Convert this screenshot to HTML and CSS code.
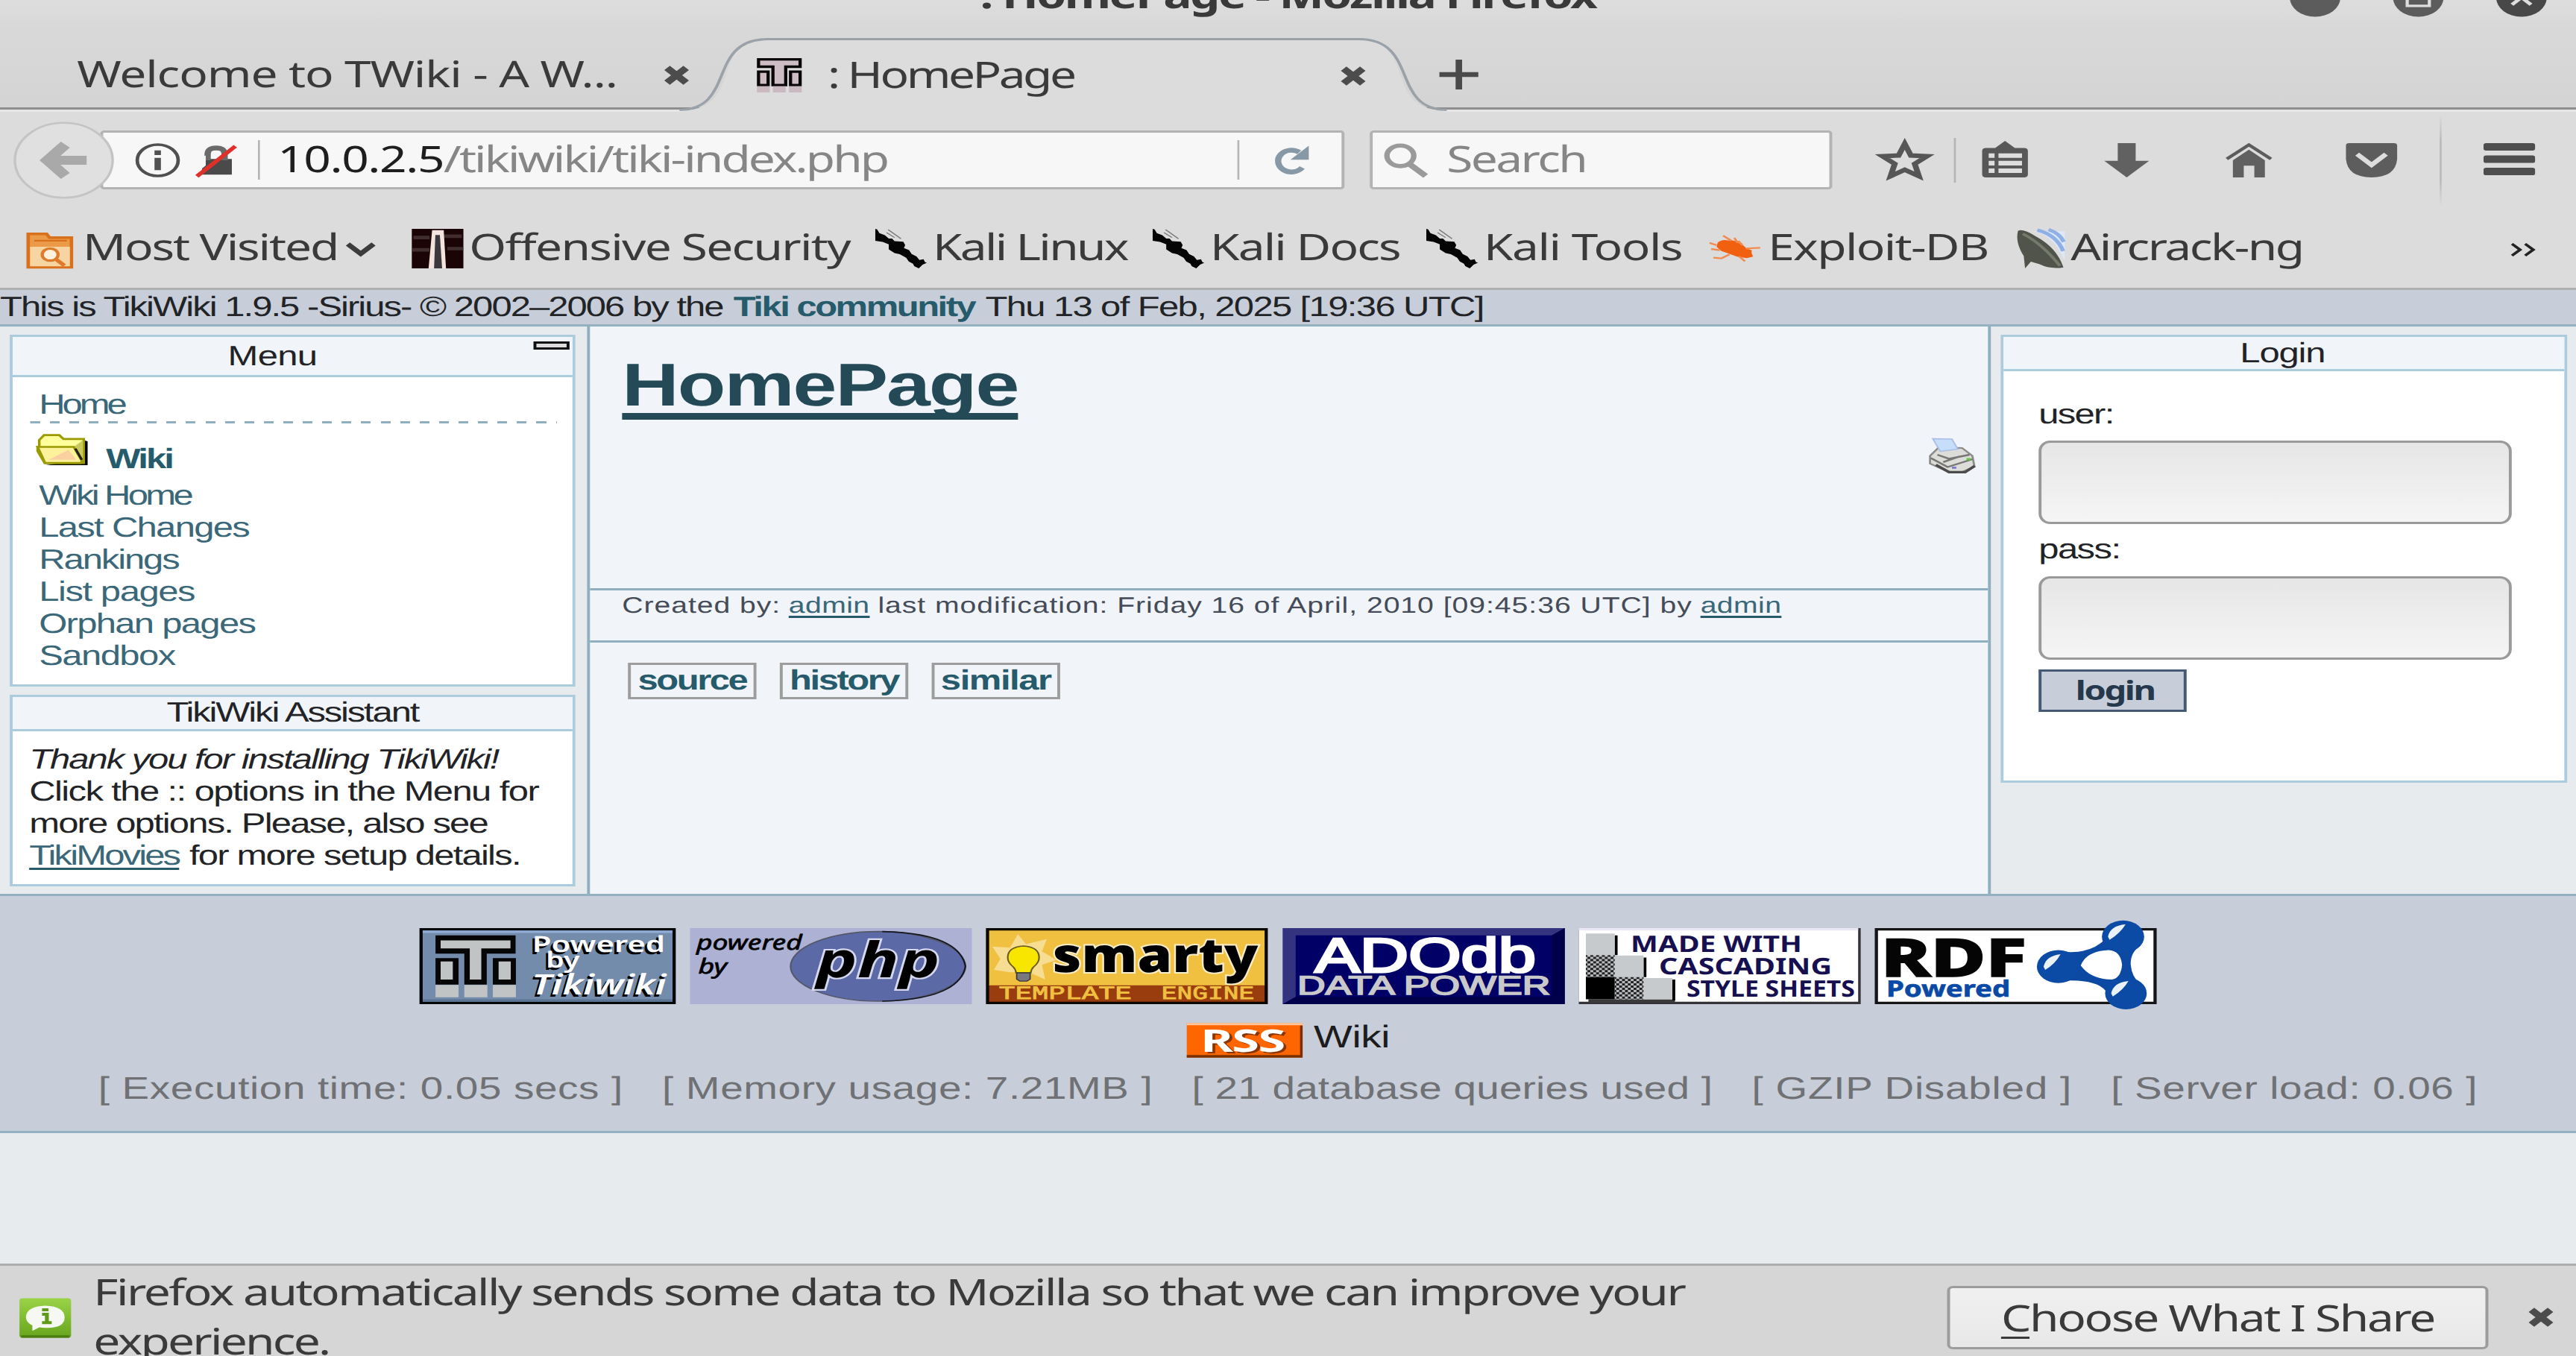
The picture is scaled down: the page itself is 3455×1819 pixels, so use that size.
FILE: index.html
```html
<!DOCTYPE html>
<html lang="en">
<head>
<meta charset="utf-8">
<title>: HomePage - Mozilla Firefox</title>
<link rel="stylesheet" href="styles.css">
</head>
<body>
<div class="window">
  <header class="titlebar">
    <div class="title">: HomePage - Mozilla Firefox</div>
    <div class="controls">
      <svg class="ctl" viewBox="0 0 16 16"><circle cx="8" cy="8" r="8" fill="#5c5c5c"/><path d="M4.500 8.400h7" stroke="#ddd" stroke-width="1.200"/></svg>
      <svg class="ctl" viewBox="0 0 16 16"><circle cx="8" cy="8" r="8" fill="#5c5c5c"/><path d="M4.500 4.500h7v7h-7z" fill="none" stroke="#ddd" stroke-width="1"/></svg>
      <svg class="ctl" viewBox="0 0 16 16"><circle cx="8" cy="8" r="8" fill="#484848"/><path d="M5 5l6 6M11 5l-6 6" stroke="#ddd" stroke-width="1.300"/></svg>
    </div>
  </header>

  <nav class="tabs">
    <div class="tab tab-first">
      <span class="ls-welcome">Welcome to TWiki - A W...</span>
      <svg class="close" viewBox="0 0 8 8"><path d="M1.200 1.200l5.600 5.600M6.800 1.200l-5.600 5.600" stroke="#4c4c4c" stroke-width="2.300"/></svg>
    </div>
    <div class="tab tab-active">
      <svg class="tab-shape" viewBox="0 0 780 97" preserveAspectRatio="none"><path d="M0 97V95C62 93 26 4 86 2.500H694C754 4 718 93 780 95V97z" fill="#dcdcdc"/><path d="M-4 94.500C54 94 24 3 86 2.500H694C756 3 726 94 784 94.500" fill="none" stroke="#9aa1a8" stroke-width="3"/></svg>
      <svg class="favicon" viewBox="0 0 14 14"><path d="M.5.500h13v3H9V11H5V3.500H.500z" fill="#cdbcc4" stroke="#0a0608" stroke-width="1"/><path d="M.5 5.500h3V11h-3zM10.500 5.500h3V11h-3z" fill="#cdbcc4" stroke="#0a0608" stroke-width="1"/><path d="M0 11.500h4V14H0zM5 11.500h4V14H5zM10 11.500h4V14h-4z" fill="#cbb9c1"/></svg>
      <span class="ls-hometab">: HomePage</span>
      <svg class="close" viewBox="0 0 8 8"><path d="M1.200 1.200l5.600 5.600M6.800 1.200l-5.600 5.600" stroke="#4c4c4c" stroke-width="2.300"/></svg>
    </div>
    <svg class="plus" viewBox="0 0 12 12"><path d="M6 0v12M0 6h12" stroke="#4a4a4a" stroke-width="2"/></svg>
  </nav>

  <div class="toolbar">
    <svg class="i-back" viewBox="0 0 32 32"><circle cx="16" cy="16" r="15.600" fill="#e0e0e0" stroke="#c4c4c4" stroke-width=".8"/><path d="M16.500 9.500L10.800 16l5.700 6.500M11.500 16H23.300" fill="none" stroke="#a9a9a9" stroke-width="3.800"/></svg>
    <div class="urlbar">
      <svg class="i-info" viewBox="0 0 14 14"><circle cx="7" cy="7" r="6.400" fill="none" stroke="#505050" stroke-width="1.100"/><path d="M7 3v1.900M7 6v5" stroke="#505050" stroke-width="2"/></svg>
      <svg class="i-lock" viewBox="0 0 13 13"><path d="M2 5.500h9.500V12H2z" fill="#4a4a4a"/><path d="M3.800 6V3.500Q3.800.900 6.500.900T9.200 3.500V6" fill="none" stroke="#6a6a6a" stroke-width="2"/><path d="M0 11.600L3.200 8.200V4L0 6z" fill="#f7f7f7"/><path d="M.4 12.700L12.600.200" stroke="#e0302a" stroke-width="1.500"/></svg>
      <i class="sep"></i>
      <span class="url"><span class="host">10.0.2.5</span><span class="path">/tikiwiki/tiki-index.php</span></span>
      <i class="sep"></i>
      <svg class="i-reload" viewBox="0 0 12 12"><path d="M9.700 9A4.200 4.500 0 1 1 8.800 2.700" fill="none" stroke="#8798a6" stroke-width="2"/><path d="M11.800 0v5.800H6z" fill="#8798a6"/></svg>
    </div>
    <div class="searchbar">
      <svg class="i-mag" viewBox="0 0 14 14"><circle cx="5.300" cy="5.200" r="4.200" fill="none" stroke="#9a9a9a" stroke-width="1.700"/><path d="M8.200 8.600l5 4.800" stroke="#9a9a9a" stroke-width="2.100"/></svg>
      <span class="ls-search">Search</span>
    </div>
    <svg class="i-star" viewBox="0 0 16 16"><path d="M8 1.500l1.900 4.700 5 .3-3.800 3.100 1.300 5L8 12l-4.400 2.600 1.300-5L1.100 6.500l5-.3z" fill="none" stroke="#565656" stroke-width="1.800"/></svg>
    <i class="sep tall"></i>
    <svg class="i-clip" viewBox="0 0 14 14.600"><path d="M1.200 2.800H4L7 0l3 2.800h2.800q1.200 0 1.200 1.200v9.400q0 1.200-1.200 1.200H1.200Q0 14.600 0 13.400V4q0-1.200 1.200-1.200z" fill="#585858"/><path d="M2 5h1.800v1.800H2zM5 5h7.200v1.800H5zM2 8h1.800v1.800H2zM5 8h7.200v1.800H5zM2 11h1.800v1.800H2zM5 11h7.200v1.800H5z" fill="#dedede"/></svg>
    <svg class="i-down" viewBox="0 0 14 14"><path d="M4.200 0h5.600v7.200H14L7 14 0 7.200h4.200z" fill="#616161"/></svg>
    <svg class="i-home" viewBox="0 0 15 14"><path d="M.6 6.500L7.500.700l6.900 5.800" fill="none" stroke="#5c5c5c" stroke-width="1.200"/><path d="M7.500 2.700l5 4.300v7H9.200V9.200H5.900V14H2.500V7z" fill="#606060"/></svg>
    <svg class="i-pocket" viewBox="0 0 16 14"><path d="M1 0h14q1 0 1 1v5.500Q15.500 14 8 14T0 6.500V1q0-1 1-1z" fill="#5d5d5d"/><path d="M3.500 4.500L8 8.900l4.500-4.400" fill="none" stroke="#dedede" stroke-width="1.700"/></svg>
    <i class="sep fade"></i>
    <svg class="i-menu" viewBox="0 0 16 13"><path d="M0 .8Q0 0 .8 0h14.400q.8 0 .8.800v1.500q0 .7-.8.700H.8Q0 3 0 2.300zM0 5.800Q0 5 .8 5h14.400q.8 0 .8.800v1.500q0 .7-.8.700H.8Q0 8 0 7.300zM0 10.800Q0 10 .8 10h14.400q.8 0 .8.800v1.500q0 .7-.8.700H.8q-.8 0-.8-.7z" fill="#4e4e4e"/></svg>
  </div>

  <svg class="defs" width="0" height="0"><defs>
    <symbol id="kali" viewBox="0 0 16 16"><path d="M0 0l.6.200L1.300 1.700 3 2.600l1.200 1.300 1 0L6 5l2.700.200.6 1.400L8.900 7.800l1.600.800.8 1.600 1.500 1 .9 1.400 1.300-.3.400 1.100.6.300-1.300.8L13.500 16l-1.400-.9-.4-1-1.300-.9-.8-1.500-2-1.400-1.600-.5L4.200 8.300l0-2L2.300 5.300 0 4.800z" fill="#050505"/><path d="M4 .3l4 3.700M3.500 1.500L6 3.500" stroke="#777" stroke-width=".35"/></symbol>
  </defs></svg>
  <nav class="bookmarks">
    <a class="bm"><svg class="i-folder" viewBox="0 0 15 15"><path d="M.6.700h5.800l.9 1.500h6.900v12.200H.600z" fill="#eb9a48" stroke="#d9711c" stroke-width="1.100"/><path d="M1.200 6h12.500v8H1.200z" fill="#f6d5a2"/><path d="M2.500 3.500h10.300" stroke="#d9711c" stroke-width=".7"/><circle cx="7.500" cy="9.200" r="2.500" fill="#fff1dc" stroke="#de7a2a" stroke-width="1"/><path d="M9.200 11l2.800 2.700" stroke="#de7a2a" stroke-width="1.400"/></svg><span class="ls-mv">Most Visited</span><svg class="i-chev" viewBox="0 0 10 6"><path d="M1 1l4 3.900L9 1" fill="none" stroke="#3c3c3c" stroke-width="1.800"/></svg></a>
    <a class="bm"><svg class="i16" viewBox="0 0 16 16"><path d="M0 0h16v16H0z" fill="#1b0405"/><path d="M.5 3.500h5M10 3h5.500M0 8.500h5.500M11 8h5" stroke="#5a4a4a" stroke-width="1.400" opacity=".6"/><path d="M6.300.500h3.600L10.600 16H5.200z" fill="#f3e5dd"/><path d="M7.300 2.500h1.400l.7 13.500H6.900z" fill="#3a3a3e"/></svg><span class="ls-os">Offensive Security</span></a>
    <a class="bm"><svg class="i16"><use href="#kali"/></svg><span class="ls-kl">Kali Linux</span></a>
    <a class="bm"><svg class="i16"><use href="#kali"/></svg><span class="ls-kd">Kali Docs</span></a>
    <a class="bm"><svg class="i16"><use href="#kali"/></svg><span class="ls-kt">Kali Tools</span></a>
    <a class="bm"><svg class="i-bug" viewBox="0 0 16 12"><path d="M2.800 3.500Q4 2 6 2.500q2-.3 3.500 1.200 1.500.8 2.300 2.100l1.600.7-.1 1 .5 1.600-2 .6-3-.6-2.500-1.200L4 6.800 2.500 5.200z" fill="#f0600f"/><path d="M7 2.600L4.500.600M9 3.500L8 1.500M11.500 5.800l4.500-.3M9.500 9l1.800 2M6.500 8.200L4 9.800l-2.500-.3M3.500 6.500L.8 6M2.500 4.500L.3 3.500M10.500 4.500L9.200 2.700" fill="none" stroke="#f28b50" stroke-width=".7"/></svg><span class="ls-ex">Exploit-DB</span></a>
    <a class="bm"><svg class="i15" viewBox="0 0 15 16"><path d="M4 1q7 0 11 12V1z" fill="#dfe8f6"/><path d="M6.500.500q6 2 8 8.500M10 .3q3.500 1.500 4.700 5" fill="none" stroke="#8fb0e6" stroke-width="1.300"/><path d="M.5.800Q2-.2 6 3q6.500 4.500 8.600 12.600-4 .9-7.500-1.300L4.500 13.300 2.700 16 2.300 11Q-.4 5.500.500.800z" fill="#50544a"/><path d="M2 2q6 4 11.500 13" fill="none" stroke="#757b6c" stroke-width="1"/></svg><span class="ls-ac">Aircrack-ng</span></a>
    <span class="more"><svg viewBox="0 0 9 5.500"><path d="M1 .3l2.600 2.450L1 5.200M5.200.300l2.600 2.450L5.200 5.200" fill="none" stroke="#222" stroke-width="1"/></svg></span>
  </nav>

  <div class="tikibar"><span class="ls-tb1">This is TikiWiki 1.9.5 -Sirius- © 2002–2006 by the</span> <b class="ls-tb2">Tiki community</b> <span class="ls-tb3">Thu 13 of Feb, 2025 [19:36 UTC]</span></div>

  <main class="columns">
    <aside class="left">
      <section class="box menu">
        <h3><span class="ls-menu">Menu</span><i class="fold"></i></h3>
        <div class="body">
          <a class="row ls-home">Home</a>
          <hr class="dash">
          <div class="wikirow"><svg class="i-open" viewBox="0 0 16 13"><path d="M3 12.700h13V3l-1.500-.5v8z" fill="#000"/><path d="M1 2.500L2.500.500h4.700l1.300 1.600h6.300v9.700H2.700L.500 7V5.300H1z" fill="#ffff9c" stroke="#9b9a00" stroke-width=".8"/><path d="M11.700 5.300l2.900-2.800v9z" fill="#c9c85a"/><path d="M.5 5.300h11.200l2.600 5.800-.5.700H2.800z" fill="#fcf29c" stroke="#9b9a00" stroke-width=".8"/><path d="M4 10.500L10 6.500l2.500 4z" fill="#fbd0a0"/><path d="M12.200 6l2 4.500" stroke="#222" stroke-width=".8"/></svg><b class="ls-wikib">Wiki</b></div>
          <a class="row ls-wh">Wiki Home</a>
          <a class="row ls-last">Last Changes</a>
          <a class="row ls-rank">Rankings</a>
          <a class="row ls-list">List pages</a>
          <a class="row ls-orph">Orphan pages</a>
          <a class="row ls-sand">Sandbox</a>
        </div>
      </section>
      <section class="box assistant">
        <h3><span class="ls-asst">TikiWiki Assistant</span></h3>
        <div class="body">
          <p class="ls-l1"><em>Thank you for installing TikiWiki!</em></p>
          <p class="ls-l2">Click the :: options in the Menu for</p>
          <p class="ls-l3">more options. Please, also see</p>
          <p><a class="link ls-tm">TikiMovies</a> <span class="ls-l4">for more setup details.</span></p>
        </div>
      </section>
    </aside>

    <article class="center">
      <div class="content">
        <h1>HomePage</h1>
        <svg class="i-print" viewBox="0 0 16 16"><path d="M.5 8l3-3.800 8 .300L15 8l.7 4.800L11 15.500 6.500 15 .5 11.500z" fill="#dcdcd8" stroke="#8b8b88" stroke-width=".7"/><path d="M1.400.300l6.600.200L10 5 4 6z" fill="#c7defb" stroke="#a9bce8" stroke-width=".5"/><path d="M.8 9l5.700 4 8.500-3.500M3 7.500l4 1.800 7-1.800M5 10.800l5.500-2.500" fill="none" stroke="#777" stroke-width=".8"/><path d="M2.500 12l4.500 3.300h5.500l3.300-2.800" fill="none" stroke="#4b4b4b" stroke-width="1.100"/><path d="M13 9.500h1.400" stroke="#5fc83c" stroke-width="1"/><path d="M8 13.300h1.500" stroke="#7a76c9" stroke-width=".9"/></svg>
      </div>
      <div class="meta"><span class="ls-cr">Created by:</span> <a class="link">admin</a> <span class="ls-mid">last modification: Friday 16 of April, 2010 [09:45:36 UTC] by</span> <a class="link">admin</a></div>
      <div class="buttons"><a class="ls-src">source</a><a class="ls-src">history</a><a class="ls-sim">similar</a></div>
    </article>

    <aside class="right">
      <section class="box login">
        <h3><span class="ls-login">Login</span></h3>
        <form class="body">
          <label class="ls-user">user:</label>
          <input type="text">
          <label class="ls-pass">pass:</label>
          <input type="password">
          <button type="button">login</button>
        </form>
      </section>
    </aside>
  </main>

  <footer class="footer">
    <div class="badges">
      <svg class="b80" viewBox="0 0 80 31"><path d="M0 0h80v31H0z" fill="#050608"/><path d="M1 1h78v29H1z" fill="#748cab"/><path d="M1 1h78v1H1z" fill="#8fabd6"/><path d="M1 29h78v1H1z" fill="#5d7595"/><path d="M5 3h25v7.400h-9V23h-7V10.400H5zM5 12.200h7.200V23H5zM22.900 12.200h7.200V23h-7.200z" fill="#060606"/><path d="M6.600 5h21.800v3.300h-9.100V21h-3.600V8.300H6.600zM6.600 13.600h3.800V21H6.600zM24.700 13.600h3.800V21h-3.800zM5 23.200h7.200v5H5zM14 23.200h7.200v5H14zM22.900 23.200h7.200v5h-7.200z" fill="#c1c4c5"/>
        <g class="embossed"><text x="35.200" y="9.800" font-size="9" textLength="41.500" lengthAdjust="spacingAndGlyphs">Powered</text><text x="39.500" y="16" font-size="9" textLength="10.500" lengthAdjust="spacingAndGlyphs">by</text><text x="35" y="27" font-size="11.500" font-style="italic" textLength="42" lengthAdjust="spacingAndGlyphs">Tikiwiki</text></g></svg>
      <svg class="b88" viewBox="0 0 88 31"><path d="M0 0h88v31H0z" fill="#adb2d5"/><ellipse cx="58.700" cy="15.600" rx="27.300" ry="14.200" fill="#5b69a7" stroke="#555766" stroke-width=".5"/><path d="M60 1.400Q84 2 86 15.600 84 29 60 29.800" fill="none" stroke="#15171f" stroke-width=".5"/>
        <g font-family="Noto Sans" font-style="italic"><text x="2" y="8.700" font-size="8.500" textLength="33" lengthAdjust="spacingAndGlyphs" stroke="#000" stroke-width=".2">powered</text><text x="2.600" y="18.600" font-size="8.500" textLength="9" lengthAdjust="spacingAndGlyphs" stroke="#000" stroke-width=".2">by</text><text x="39.500" y="20.200" font-size="20" font-weight="700" textLength="38.500" lengthAdjust="spacingAndGlyphs" stroke="#d5d8ee" stroke-width="1.300" paint-order="stroke">php</text></g></svg>
      <svg class="b88" viewBox="0 0 88 31"><path d="M0 0h88v31H0z" fill="#0b0703"/><path d="M1 1h86v22.500H1z" fill="#f0c040"/><path d="M1 23.300h86V30H1z" fill="#993d0e"/><path d="M10 2.500l2.500 4 6.500-2-1.500 5 4.500 3.500-4.500 2 1 6-5-3-6 0-5-1 2-4.500L2 7.500l5.500.5z" fill="#f7dd92"/><path d="M11.700 7.300q4.900.4 4.900 4.700 0 2-1.700 3.800-.8 1-.9 2.400H9.400q-.1-1.400-.9-2.400Q6.800 14 6.800 12q0-4.300 4.900-4.700z" fill="#f8e600" stroke="#6b5c1c" stroke-width=".5"/><path d="M9.600 18.300h4.200v2.500l-1 .8h-2.200l-1-.8z" fill="#77777c" stroke="#3a3a3a" stroke-width=".4"/>
        <text x="20.800" y="18" font-family="Noto Sans" font-weight="900" font-size="19.500" textLength="64.200" lengthAdjust="spacingAndGlyphs" stroke="#fbeecb" stroke-width="1.200" paint-order="stroke">smarty</text><g font-family="Liberation Mono" font-size="7.600" fill="#f0c040" stroke="#f0c040" stroke-width=".25"><text x="4" y="29" textLength="41.500" lengthAdjust="spacingAndGlyphs">TEMPLATE</text><text x="54.800" y="29" textLength="29" lengthAdjust="spacingAndGlyphs">ENGINE</text></g></svg>
      <svg class="b88" viewBox="0 0 88 31"><path d="M0 0h88v31H0z" fill="#000066"/><path d="M0 0h88l-4 3H4v25l-4 3z" fill="#33337f"/><path d="M88 0v31H0l4-3h80V3z" fill="#00004a"/><g font-family="Liberation Sans"><text x="10" y="17.800" font-size="19.800" fill="#fff" stroke="#fff" stroke-width=".9" textLength="69" lengthAdjust="spacingAndGlyphs">ADOdb</text><text x="4.500" y="27" font-size="10.800" fill="#c9c9c9" stroke="#c9c9c9" stroke-width=".5" textLength="79" lengthAdjust="spacingAndGlyphs">DATA POWER</text></g></svg>
      <svg class="b88" viewBox="0 0 88 31"><defs><pattern id="chk" width="1.800" height="1.800" patternUnits="userSpaceOnUse"><path d="M0 0h1.800v1.800H0z" fill="#b9bdc0"/><path d="M0 0h.9v.9H0zM.9.900h.9v.9H.900z" fill="#222"/></pattern></defs><path d="M0 0h88v31H0z" fill="#333338"/><path d="M0 0h87.200v30H0z" fill="#fff"/><path d="M0 0h87.200v1H0z" fill="#e9e8f4"/><path d="M3 29h27v1.500H3z" fill="#3a3a3a"/><path d="M11.200 3h.9v8h-.9zM20.200 12h.9v8h-.9zM29.200 21h.9v8.500h-.9z" fill="#000"/><path d="M2.200 2.200h9V11h-9zM11.200 11.200h9v9h-9zM20.200 20.400h9V29h-9z" fill="#c6cacd"/><path d="M2.200 11h9v9h-9zM11.200 20h9v9h-9z" fill="url(#chk)"/><path d="M2.200 20h9v9h-9z" fill="#000"/><g font-family="Noto Sans" font-weight="700" font-size="9.300" fill="#160f50"><text x="16.200" y="9.800" textLength="53.500" lengthAdjust="spacingAndGlyphs">MADE WITH</text><text x="25" y="18.900" textLength="54" lengthAdjust="spacingAndGlyphs">CASCADING</text><text x="33.600" y="27.900" textLength="52.600" lengthAdjust="spacingAndGlyphs">STYLE SHEETS</text></g></svg>
      <svg class="b88" viewBox="0 0 88 31"><path d="M.5.500h87v30H.500z" fill="#fff" stroke="#151515"/><g font-family="Noto Sans"><text x="1.900" y="19.600" font-size="21.500" font-weight="800" textLength="45.500" lengthAdjust="spacingAndGlyphs" fill="#050505" stroke="#050505" stroke-width=".5">RDF</text><text x="3.600" y="27.900" font-size="9.200" font-weight="700" textLength="38.700" lengthAdjust="spacingAndGlyphs" fill="#0a49a5" stroke="#0a49a5" stroke-width=".2">Powered</text></g><path fill-rule="evenodd" d="M58 9.500Q67 11 72 4.500L83 7Q79.700 10 79.900 15 80.200 20 83 23L73 28Q71.500 20.500 58 21.500zM64.300 15.300Q66 9.400 73 9 76.700 9.200 77.200 15 76.800 20.500 74 21 67.500 20.800 64.300 15.300z" fill="#0b49a3"/><g fill="#0b4aa5"><circle cx="77.500" cy="3.500" r="6.600"/><circle cx="57.300" cy="15.700" r="6.700"/><circle cx="78.400" cy="26.600" r="6.500"/></g><path d="M72.800 3.500Q73.500-1 78.300-1.500 76.500 2.300 73.300 4.800zM52.700 15.700Q53.400 11.300 58 10.600 56.400 14.500 53.200 17zM73.800 26.600Q74.500 22.200 79.200 21.600 77.500 25.400 74.300 27.900z" fill="#fff" opacity=".92"/></svg>
    </div>
    <div class="rss">
      <svg class="b36" viewBox="0 0 36 14"><path d="M0 0h36v14H0z" fill="#ff6600"/><path d="M0 0h36v.900H0z" fill="#ffc7a0"/><path d="M0 13h36v1H0zM35.200 1h.8v13h-.8z" fill="#7a3000"/><text class="rss-text" x="4.300" y="11.600" textLength="26" lengthAdjust="spacingAndGlyphs">RSS</text></svg>
      <span>Wiki</span>
    </div>
    <div class="stats"><span class="ls-s1">[ Execution time: 0.05 secs ]</span><span class="ls-s1">[ Memory usage: 7.21MB ]</span><span class="ls-s3">[ 21 database queries used ]</span><span class="ls-s4">[ GZIP Disabled ]</span><span class="ls-s1">[ Server load: 0.06 ]</span></div>
  </footer>

  <div class="blank"></div>

  <div class="infobar">
    <svg class="i-note" viewBox="0 0 16 16"><defs><linearGradient id="g" x2="0" y2="1"><stop stop-color="#9ad346"/><stop offset="1" stop-color="#67a51d"/></linearGradient></defs><path d="M1 0h14q1 0 1 1v14q0 1-1 1H1q-1 0-1-1V1q0-1 1-1z" fill="url(#g)"/><path d="M.5 15.500h15" stroke="#4b7d12"/><path d="M8 3q6 .3 6 4.800T8 12q-1 0-1.800-.2L4 13.200V11Q2 9.800 2 7.800 2 3.300 8 3z" fill="#f6f8f2"/><path d="M7 4.700h2M7 6.500h1.500v3.300M7 9.900h3" stroke="#5f9a1b" stroke-width="1.200" fill="none"/></svg>
    <p><span class="ls-i1">Firefox automatically sends some data to Mozilla so that we can improve your</span><br><span class="ls-i2">experience.</span></p>
    <button type="button"><u>C</u>hoose What I Share</button>
    <svg class="close" viewBox="0 0 8 8"><path d="M1.200 1.200l5.600 5.600M6.800 1.200l-5.600 5.600" stroke="#4c4c4c" stroke-width="2.300"/></svg>
  </div>
</div>
</body>
</html>
```
FILE: styles.css
```css
* { box-sizing: border-box; }
html, body { margin: 0; width: 3455px; height: 1819px; overflow: hidden; background: #d6d6d6; }
p, h1, h3 { margin: 0; font-weight: 400; }
svg { display: block; flex: none; overflow: visible; }

/* The whole screen is an anamorphic 2646px canvas widened to the viewport. */
.window {
  width: 2646px; height: 1819px; overflow: hidden;
  transform: scaleX(1.305745); transform-origin: 0 0;
  display: flex; flex-direction: column;
  font: 49px/60px "Noto Sans", "Open Sans", sans-serif; color: #3a3a3a;
  white-space: nowrap; text-rendering: geometricPrecision;
}
.window > * { flex: none; }
.defs { position: absolute; }

/* title bar and tabs */
.titlebar { position: relative; height: 42px; background: linear-gradient(#dddddd, #d8d8d8); text-align: center; }
.title { margin-top: -37px; font-weight: 700; letter-spacing: -1.98px; height: 60px; }
.controls { position: absolute; right: 30px; top: -30px; display: flex; gap: 54px; }
.ctl { width: 52px; height: 53px; }
.tabs { position: relative; height: 105px; padding-top: 11px; display: flex; align-items: center; background: linear-gradient(#d8d8d8, #d4d4d4); border-bottom: 3px solid #8e8e8e; }
.tabs .close { margin-top: 4px; }
.close { width: 28px; height: 28px; }
.tab { display: flex; flex: none; align-items: center; position: relative; }
.tab > span { flex: none; }
.tab-first { width: 702px; padding-left: 79px; }
.ls-welcome { letter-spacing: -.86px; width: 602px; }
.tab-first .close { position: relative; z-index: 1; }
.tab-active { width: 780px; height: 96px; padding-left: 75px; margin-bottom: -3px; margin-top: -3px; padding-top: 2px; }
.tab-active > span { margin-left: 26px; width: 526px; letter-spacing: -2.7px; position: relative; }
.tab-active > .close, .favicon { position: relative; }
.tab-shape { position: absolute; left: 0; top: -1px; width: 780px; height: 100px; }
.favicon { width: 47px; height: 46px; margin-top: 3px; }
.plus { width: 41px; height: 40px; margin: 3px 0 0 -4px; }

/* navigation */
.toolbar { height: 134px; display: flex; align-items: center; background: #dcdcdc; border-top: 3px solid #e6e6e6; padding-bottom: 2px; }
.urlbar, .searchbar { height: 79px; display: flex; align-items: center; background: #f7f7f7; border: 3px solid #b3b3b3; border-radius: 4px; }
.urlbar { margin-left: -14px; width: 1278px; padding-left: 33px; }
.i-back { width: 103px; height: 106px; margin-left: 14px; position: relative; z-index: 1; }
.i-info { width: 46px; height: 46px; }
.i-lock { width: 42px; height: 43px; margin: 3px 0 0 16px; }
.sep { flex: none; width: 2px; height: 53px; background: #b5b5b5; }
.urlbar .sep { margin-left: 22px; }
.url { margin: -3px 0 0 18px; width: 986px; }
.urlbar .url + .sep { margin-left: 0; }
.host { color: #1e1e1e; letter-spacing: -1.1px; }
.path { color: #868686; letter-spacing: -2.25px; }
.i-reload { width: 39px; height: 40px; margin-left: 33px; }
.searchbar { margin-left: 26px; width: 475px; padding-left: 11px; }
.i-mag { width: 46px; height: 46px; }
.ls-search { letter-spacing: -2px; color: #868686; margin: -3px 0 0 19px; }
.i-star { width: 53px; height: 53px; margin-left: 48px; }
.sep.tall { height: 60px; margin-left: 24px; }
.i-clip { width: 47px; height: 49px; margin: -3px 0 0 27px; }
.i-down { width: 47px; height: 46px; margin-left: 78px; }
.i-home { width: 50px; height: 46px; margin-left: 77px; }
.i-pocket { width: 54px; height: 46px; margin-left: 74px; }
.sep.fade { height: 122px; margin-left: 43px; background: linear-gradient(#dcdcdc, #b8b8b8 30%, #b8b8b8 70%, #dcdcdc); }
.i-menu { width: 53px; height: 43px; margin: -3px 0 0 43px; }

/* bookmarks */
.bookmarks { height: 108px; padding-left: 27px; display: grid; grid-template-columns: 396px 476px 285px 281px 292px 314px 506px auto; align-items: center; background: #dcdcdc; border-bottom: 3px solid #b0b0b0; }
.bm { display: flex; align-items: center; }
.bm > span { margin: -5px 0 0 6px; }
.i16 { width: 53px; height: 53px; }
.i15 { width: 50px; height: 53px; }
.i-folder { width: 49px; height: 50px; margin-top: 4px; }
.i-folder + span { margin-left: 9px; }
.i-bug { width: 53px; height: 40px; margin-left: -2px; }
.i-bug + span { margin-left: 8px; }
.i-chev { width: 33px; height: 20px; margin-left: 7px; }
.ls-mv { letter-spacing: -1.63px; } .ls-os { letter-spacing: -1.34px; } .ls-kl { letter-spacing: -2.07px; }
.ls-kd { letter-spacing: -1.47px; } .ls-kt { letter-spacing: -1.11px; } .ls-ex { letter-spacing: -1.3px; } .ls-ac { letter-spacing: -1.9px; }
.more svg { width: 29px; height: 18px; margin-top: 3px; }

/* wiki page */
.tikibar, .columns { font: 37.5px/43px "Liberation Sans", Arial, sans-serif; color: #222326; }
.tikibar { height: 49px; background: #c7ced9; border-bottom: 3px solid #93b1c1; padding: 1px 0 0 0; letter-spacing: .4px; }
.tikibar b, .wikirow b { color: #255b6b; }
.ls-tb1 { letter-spacing: -1.5px; } .ls-tb2 { letter-spacing: -1.9px; } .ls-tb3 { letter-spacing: -1.24px; }
.columns { height: 761px; display: grid; grid-template-columns: 603px 1442px 1fr; background: #e7ebee; }
.left { padding: 11px 12px 0 10px; display: flex; flex-direction: column; gap: 11px; }
.right { padding: 11px 9px 0 10px; }
.box { border: 3px solid #abccdc; background: #fff; }
.box h3 { font-size: inherit; background: #f1f4f8; border-bottom: 3px solid #abccdc; text-align: center; }
.menu { height: 472px; }
.menu h3 { height: 54px; line-height: 50px; display: flex; justify-content: space-between; padding: 0 3px 0 221px; }
.fold { width: 37px; height: 11px; border: 3px solid #111; background: #ddd; margin-top: 6px; }
.menu .body { padding: 15px 16px 0 18px; }
.row { display: block; padding-left: 9px; height: 43px; color: #3b6878; }
.dash { border: 0; margin: 1px 0 0; height: 3px; background: repeating-linear-gradient(90deg, #8fafbf 0 10px, transparent 10px 20px); }
.wikirow { height: 75px; display: flex; align-items: center; }
.i-open { width: 53px; height: 45px; margin: -4px 19px 0 6px; }
.wikirow b { margin-top: 20px; }
.ls-menu { letter-spacing: -.5px; } .ls-home { letter-spacing: -3.1px; } .ls-wikib { letter-spacing: -2.2px; } .ls-wh { letter-spacing: -2.8px; }
.ls-last { letter-spacing: -1.3px; } .ls-rank { letter-spacing: -1.6px; } .ls-list { letter-spacing: -1.1px; } .ls-orph { letter-spacing: -1.3px; } .ls-sand { letter-spacing: -1.2px; }
.assistant { height: 257px; }
.assistant h3 { height: 46px; line-height: 40px; }
.assistant .body { padding: 16px 0 0 17px; }
.ls-asst { letter-spacing: -1.65px; } .ls-l1 { letter-spacing: -1.56px; } .ls-l2 { letter-spacing: -1.22px; } .ls-l3 { letter-spacing: -1.4px; } .ls-tm { letter-spacing: -2.17px; } .ls-l4 { letter-spacing: -1.35px; }
.link { color: #3b6878; text-decoration: underline 3px #255b6b; text-underline-offset: 4px; text-decoration-skip-ink: none; }

.center { background: #f1f4f8; border: solid #8fafbf; border-width: 0 3px; }
.content { height: 351px; display: flex; justify-content: space-between; padding: 34px 13px 0 33px; }
h1 { font-size: 81px; line-height: 90px; font-weight: 700; letter-spacing: -1.5px; color: #244a58; text-decoration: underline 9px; text-underline-offset: 10px; text-decoration-skip-ink: none; }
.i-print { width: 48px; height: 53px; margin-top: 113px; }
.meta { height: 73px; border: solid #8fafbf; border-width: 3px 0; font-size: 30px; line-height: 41px; padding-left: 33px; color: #454c58; }
.ls-cr { letter-spacing: .7px; } .ls-mid { letter-spacing: .73px; }
.meta .link { letter-spacing: .3px; }
.buttons { display: flex; gap: 24px; padding: 27px 0 0 39px; }
.buttons a { width: 132px; height: 49px; border: 3px solid #9d9d9d; text-align: center; font-weight: 700; line-height: 41px; color: #255b6b; }
.ls-src { letter-spacing: -1.9px; } .ls-sim { letter-spacing: -1.1px; }

.login { height: 601px; }
.login h3 { height: 46px; line-height: 42px; padding-right: 3px; }
.login .body { padding: 36px 0 0 36px; display: flex; flex-direction: column; align-items: flex-start; }
.login label { height: 57px; }
.login .ls-pass { padding-top: 12px; height: 70px; }
.login input { width: 486px; height: 112px; border: 3px solid #9a9a9a; border-radius: 12px / 14px; background: linear-gradient(#e6e6e6, #f5f5f5); padding: 0; outline: 0; }
.login button { margin-top: 13px; width: 152px; height: 57px; border: 3px solid #465a76; background: #c7ced9; font: 700 36px/40px "Noto Sans", sans-serif; letter-spacing: -1.8px; color: #25384c; padding: 0 0 2px 5px; }
.ls-login { letter-spacing: -.9px; } .ls-user { letter-spacing: -1.3px; } .ls-pass { letter-spacing: -1.2px; }

/* footer */
.footer { height: 321px; background: #c7ced9; border: solid #93b1c1; border-width: 3px 0; padding-top: 43px; font: 42px/50px "Liberation Sans", Arial, sans-serif; color: #1c1c1e; }
.badges { display: flex; justify-content: center; gap: 13.2px; height: 103px; }
.b80 { width: 265px; height: 102px; }
.b88 { width: 291px; height: 102px; }
.embossed { font-family: "Noto Sans"; font-weight: 600; fill: #fff; text-shadow: -.7px .9px 0 #000; }
.rss-text { font: 700 12.6px "Noto Sans"; fill: #fff; text-shadow: .7px .6px 0 #8a3400; }
.rss { display: flex; justify-content: center; gap: 12px; margin-top: 18px; height: 50px; letter-spacing: -.33px; }
.b36 { width: 119px; height: 47px; margin-top: 6px; }
.stats { display: flex; justify-content: center; gap: 40px; margin-top: 19px; color: #707174; }
.ls-s1 { letter-spacing: .48px; } .ls-s3 { letter-spacing: .18px; } .ls-s4 { letter-spacing: .59px; }
.blank { height: 175px; background: #e7ebee; }

.infobar { height: 150px; background: #d6d6d6; border-top: 3px solid #aeaeae; display: flex; line-height: 66px; padding-left: 20px; }
.i-note { width: 53px; height: 54px; margin-top: 43px; }
.infobar p { margin: 2px 0 0 23px; width: 1904px; }
.ls-i1 { letter-spacing: -1.93px; } .ls-i2 { letter-spacing: -2.13px; }
.infobar button { width: 556px; height: 85px; margin-top: 27px; border: 3px solid #9c9c9c; border-radius: 6px; background: linear-gradient(#f0f0f0, #e8e8e8); font: 49px/60px "Noto Sans", sans-serif; letter-spacing: -1.79px; color: #3a3a3a; padding: 0 0 2px; }
.infobar u { text-decoration-thickness: 3px; text-underline-offset: 7px; }
.infobar .close { margin: 55px 0 0 40px; }
```
